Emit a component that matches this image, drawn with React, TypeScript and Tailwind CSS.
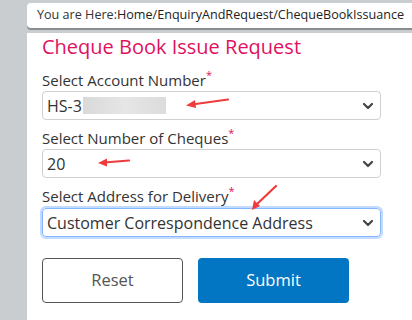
import React from "react";

const Chevron = () => (
  <svg width="12" height="8" viewBox="0 0 12 8" className="absolute right-[6px] top-1/2 -translate-y-1/2">
    <path d="M2 2 L6 6 L10 2" fill="none" stroke="#444" strokeWidth="2.2" strokeLinecap="round" strokeLinejoin="round" />
  </svg>
);

const Label = ({ text }: { text: string }) => (
  <div className="text-[15px] leading-[19px] text-[#333] flex">
    <span>{text}</span>
    <span className="text-[#e0115f] text-[11px] leading-[10px] -mt-[1px]">*</span>
  </div>
);

export default function App() {
  return (
    <div
      className="relative w-[412px] h-[320px] bg-[#c9cdcf] overflow-hidden pl-[27px] pt-[3px]"
      style={{ fontFamily: '"Open Sans", "Noto Sans", sans-serif' }}
    >
      <div className="h-[25px] bg-white rounded-l-[4px] shadow-[0_2px_0_#8a8d8f] flex items-center pl-[10px] text-[12.6px] text-[#222] whitespace-nowrap">
        <span className="text-[#333]">You are Here:</span>
        <span>Home/EnquiryAndRequest/ChequeBookIssuance</span>
      </div>
      <div className="mt-[5px] bg-white h-[300px] pl-[15px] pt-[1px]">
        <div className="text-[20px] leading-[26px] text-[#e0115f]">Cheque Book Issue Request</div>

        <div className="mt-[11px]"><Label text="Select Account Number" /></div>
        <div className="relative mt-[1px] w-[339px] h-[29px] border border-[#d0d0d0] rounded-[4px] flex items-center pl-[4px] text-[16px] text-[#333]">
          <span>HS-3</span>
          <div className="ml-[1px] w-[83px] h-[17px] bg-gradient-to-r from-[#d9d9d9] via-[#e6e6e6] to-[#dcdcdc]" />
          <Chevron />
        </div>

        <div className="mt-[9px]"><Label text="Select Number of Cheques" /></div>
        <div className="relative mt-[1px] w-[339px] h-[29px] border border-[#d0d0d0] rounded-[4px] flex items-center pl-[4px] text-[16px] text-[#333]">
          <span>20</span>
          <Chevron />
        </div>

        <div className="mt-[9px]"><Label text="Select Address for Delivery" /></div>
        <div className="relative mt-[2px] w-[339px] h-[29px] border border-[#86b7fe] rounded-[4px] shadow-[0_0_0_2px_#c2dbfe] flex items-center pl-[4px] text-[16px] text-[#333]">
          <span>Customer Correspondence Address</span>
          <Chevron />
        </div>

        <div className="mt-[21px] flex gap-[15px]">
          <button className="w-[141px] h-[45px] border border-[#555] rounded-[4px] text-[16.5px] text-[#555] bg-white">Reset</button>
          <button className="w-[151px] h-[45px] rounded-[4px] text-[16.5px] text-white bg-[#0275c3]">Submit</button>
        </div>
      </div>

      <svg className="absolute left-0 top-0 pointer-events-none" width="412" height="320">
        <g stroke="#ef3b3b" strokeWidth="2.2" fill="#ef3b3b" strokeLinecap="round">
          <line x1="228" y1="99.5" x2="192" y2="104.5" />
          <polygon points="186,105.5 195,100 196,108" stroke="none" />
          <line x1="129" y1="160.5" x2="104" y2="162.5" />
          <polygon points="98,163 107,158.5 107,166.5" stroke="none" />
          <line x1="276" y1="186" x2="256" y2="205" />
          <polygon points="252,210 254,200 260,206" stroke="none" />
        </g>
      </svg>
    </div>
  );
}
